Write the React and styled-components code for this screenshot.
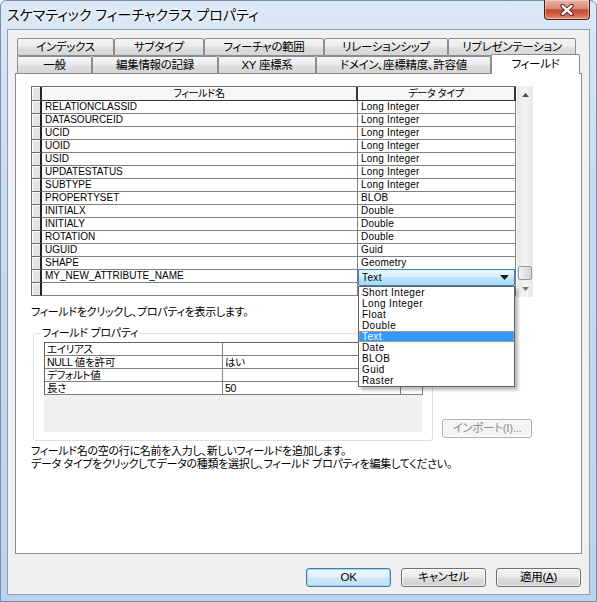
import React from 'react';
import styled, { createGlobalStyle, css } from 'styled-components';

const JP = `"Liberation Sans", "Noto Sans CJK JP", sans-serif`;
const GRID = `"Liberation Sans", Arial, sans-serif`;

// narrow Japanese UI text, close to the old bitmap UI font
const jpText = (size, line) => css`
  font: ${size}px/${line}px ${JP};
  font-feature-settings: "palt";
  letter-spacing: -0.3px;
  color: #000;
`;

const GlobalStyle = createGlobalStyle`
  html, body { margin: 0; padding: 0; overflow: hidden; background: #fff; }
  #root { width: 597px; height: 602px; }
  * { box-sizing: border-box; }
`;

const fields = [
  ['RELATIONCLASSID', 'Long Integer'],
  ['DATASOURCEID', 'Long Integer'],
  ['UCID', 'Long Integer'],
  ['UOID', 'Long Integer'],
  ['USID', 'Long Integer'],
  ['UPDATESTATUS', 'Long Integer'],
  ['SUBTYPE', 'Long Integer'],
  ['PROPERTYSET', 'BLOB'],
  ['INITIALX', 'Double'],
  ['INITIALY', 'Double'],
  ['ROTATION', 'Double'],
  ['UGUID', 'Guid'],
  ['SHAPE', 'Geometry'],
  ['MY_NEW_ATTRIBUTE_NAME', 'combo'],
  ['', ''],
];

const typeOptions = ['Short Integer', 'Long Integer', 'Float', 'Double', 'Text', 'Date', 'BLOB', 'Guid', 'Raster'];

const topTabs = [
  ['インデックス', 97],
  ['サブタイプ', 90],
  ['フィーチャの範囲', 120],
  ['リレーションシップ', 124],
  ['リプレゼンテーション', 128],
];

const bottomTabs = [
  ['一般', 75],
  ['編集情報の記録', 126],
  ['XY 座標系', 98],
  ['ドメイン、座標精度、許容値', 175],
];

const props = [
  ['エイリアス', ''],
  ['NULL 値を許可', 'はい'],
  ['デフォルト値', ''],
  ['長さ', '50'],
];

const Window = styled.div`
  width: 597px;
  height: 602px;
  display: flex;
  flex-direction: column;
  padding: 0 6px 6px;
  border: 1px solid #7890aa;
  border-radius: 6px 6px 0 0;
  background: linear-gradient(180deg, #dbe8f6 0%, #c8dcf1 30%, #bdd3ec 100%);
`;

const TitleBar = styled.div`
  height: 28px;
  display: flex;
  align-items: flex-start;
`;

const Title = styled.div`
  flex: 1;
  padding: 4px 0 0 0;
  font: 14px/20px ${JP};
  font-feature-settings: "palt";
  color: #000;
  text-shadow: 0 0 6px #fff, 0 0 3px #fff;
`;

const CloseButton = styled.div`
  width: 46px;
  height: 20px;
  margin-top: -1px;
  border: 1px solid #4d1e14;
  border-top: none;
  border-radius: 0 0 4px 4px;
  background: linear-gradient(180deg, #eab3a7 0%, #d98a76 45%, #c2482e 52%, #d0654b 80%, #e49a80 100%);
  box-shadow: inset 0 0 0 1px rgba(255, 255, 255, 0.35);
  display: flex;
  align-items: center;
  justify-content: center;
`;

const Client = styled.div`
  flex: 1;
  border: 1px solid #8aa0b8;
  background: #f0f0f0;
  display: flex;
  flex-direction: column;
  padding-top: 8px;
`;

const TabArea = styled.div`
  margin: 0 7px;
  display: flex;
  flex-direction: column;
`;

const TabRow = styled.div`
  display: flex;
  align-items: flex-start;
  height: 18px;
  padding-left: 2px;
  position: relative;
  z-index: ${p => p.$z};
  margin-bottom: ${p => (p.$last ? '-1px' : '0')};
`;

const Tab = styled.div`
  width: ${p => p.$w}px;
  height: ${p => (p.$active ? 20 : p.$short ? 17 : 18)}px;
  margin-top: ${p => (p.$active ? '-2px' : '0')};
  border: 1px solid #898c95;
  border-bottom: ${p => (p.$short || p.$active ? 'none' : '1px solid #898c95')};
  border-radius: 2px 2px 0 0;
  background: ${p =>
    p.$active ? '#fff' : 'linear-gradient(180deg, #f4f4f4 0%, #ececec 45%, #dedede 55%, #d6d6d6 100%)'};
  ${jpText(11.5, 16)}
  text-align: center;
  white-space: nowrap;
  padding-top: ${p => (p.$active ? '1px' : '0')};
`;

const Panel = styled.div`
  height: 481px;
  border: 1px solid #898c95;
  background: #fff;
  padding: 12px 0 0 15px;
  display: flex;
  flex-direction: column;
  position: relative;
  z-index: 1;
`;

const GridBlock = styled.div`
  display: flex;
  align-items: flex-start;
`;

const Table = styled.div`
  width: 485px;
  border-left: 1px solid #6e6e6e;
  border-top: 1px solid #6e6e6e;
  display: grid;
  grid-template-columns: 10px 316px 158px;
  grid-auto-rows: 13px;
  grid-template-rows: 14px;
`;

const Selector = styled.div`
  background: #e4e4e4;
  border-right: 2px solid #222;
  border-bottom: 1px solid #6a6a6a;
  box-shadow: inset 1px 1px 0 #fff;
`;

const HeadCell = styled.div`
  background: #f6f6f6;
  border-right: 2px solid #333;
  border-bottom: 1px solid #333;
  box-shadow: inset 1px 1px 0 #fff;
  ${jpText(10, 13)}
  text-align: center;
`;

const Cell = styled.div`
  position: relative;
  background: #fff;
  border-right: 1px solid #808080;
  border-bottom: 1px solid #808080;
  padding-left: 3px;
  font: 10px/12px ${GRID};
  letter-spacing: ${p => (p.$caps ? '0' : '0.2px')};
  color: #000;
  white-space: nowrap;
`;

const Combo = styled.div`
  position: absolute;
  top: -1px;
  left: 0;
  width: 157px;
  height: 17px;
  z-index: 3;
  border: 1px solid #3c7fb1;
  border-radius: 2px;
  background: linear-gradient(180deg, #eaf6fd 0%, #d9f0fc 45%, #bee6fd 50%, #a7d9f5 100%);
  display: flex;
  align-items: center;
  justify-content: space-between;
  padding: 0 5px 0 3px;
  font: 10px/14px ${GRID};
  letter-spacing: 0.4px;
`;

const DropList = styled.div`
  position: absolute;
  top: 16px;
  left: 0;
  width: 157px;
  z-index: 4;
  border: 1px solid #646464;
  background: #fff;
  box-shadow: 3px 3px 3px rgba(0, 0, 0, 0.28);
`;

const Option = styled.div`
  height: 11px;
  padding-left: 3px;
  font: 10px/11px ${GRID};
  letter-spacing: 0.4px;
  color: ${p => (p.$selected ? '#fff' : '#000')};
  background: ${p => (p.$selected ? '#3399ff' : 'transparent')};
  outline: ${p => (p.$selected ? '1px dotted #ff9a2e' : 'none')};
  outline-offset: -1px;
`;

const ScrollBar = styled.div`
  width: 16px;
  height: 211px;
  margin-left: 1px;
  background: linear-gradient(90deg, #e6e6e6, #f2f2f2 40%, #f2f2f2 60%, #e6e6e6);
  display: flex;
  flex-direction: column;
`;

const ScrollArrow = styled.div`
  height: 17px;
  display: flex;
  align-items: center;
  justify-content: center;
`;

const ScrollTrack = styled.div`
  flex: 1;
  display: flex;
  flex-direction: column;
  justify-content: flex-end;
`;

const Thumb = styled.div`
  height: 14px;
  margin: 0 1px;
  border: 1px solid #979797;
  border-radius: 2px;
  background: linear-gradient(90deg, #f3f3f3, #e2e2e2 50%, #d6d6d6);
`;

const Hint = styled.div`
  margin-top: 8px;
  ${jpText(11, 14)}
`;

const PropsRow = styled.div`
  display: flex;
  align-items: flex-end;
  margin-top: 7px;
`;

const GroupBox = styled.fieldset`
  width: 400px;
  margin: 0 0 0 2px;
  padding: 2px 10px 8px;
  border: 1px solid #d5dfe5;
  border-radius: 3px;
  min-width: 0;
`;

const GroupLabel = styled.legend`
  margin-left: -4px;
  padding: 0 2px;
  ${jpText(11, 14)}
`;

const PropsArea = styled.div`
  height: 90px;
  background: #f0f0f0;
`;

const PropsTable = styled.div`
  display: grid;
  grid-template-columns: 178px 178px 22px;
  grid-auto-rows: 13px;
  border-left: 1px solid #646464;
  border-top: 1px solid #646464;
`;

const PropCell = styled.div`
  background: #fff;
  border-right: 1px solid #808080;
  border-bottom: 1px solid #808080;
  padding-left: 2px;
  ${jpText(10.5, 12)}
  white-space: nowrap;
`;

const Button = styled.div`
  width: ${p => p.$w}px;
  height: ${p => p.$h}px;
  border: 1px solid ${p => (p.$disabled ? '#adb2b5' : p.$default ? '#3c7fb1' : '#707070')};
  border-radius: 3px;
  background: ${p =>
    p.$disabled
      ? '#f4f4f4'
      : p.$default
      ? 'linear-gradient(180deg, #eef6fb 0%, #e4f0f8 45%, #cfe6f4 55%, #c3dfef 100%)'
      : 'linear-gradient(180deg, #f2f2f2 0%, #ebebeb 45%, #dddddd 55%, #cfcfcf 100%)'};
  box-shadow: ${p => (p.$default ? 'inset 0 0 0 1px #9fd6f5' : 'inset 0 0 0 1px rgba(255,255,255,0.7)')};
  ${p => jpText(11.5, p.$h - 2)}
  color: ${p => (p.$disabled ? '#8d8d8d' : '#000')};
  text-align: center;
  white-space: nowrap;
`;

const ImportButton = styled(Button)`
  margin: 0 0 3px 9px;
`;

const HelpText = styled.div`
  margin-top: 4px;
  ${jpText(11, 13)}
`;

const ButtonRow = styled.div`
  display: flex;
  justify-content: flex-end;
  gap: 10px;
  margin-top: 14px;
  padding-right: 8px;
`;

const Triangle = ({ up, color = '#4d4d4d', w = 7, h = 4 }) => (
  <svg width={w} height={h} viewBox={`0 0 ${w} ${h}`}>
    <path d={up ? `M0 ${h} L${w / 2} 0 L${w} ${h}Z` : `M0 0 L${w} 0 L${w / 2} ${h}Z`} fill={color} />
  </svg>
);

const CloseGlyph = () => (
  <svg width="14" height="12" viewBox="0 0 14 12">
    <path d="M2.5 2 L11.5 10 M11.5 2 L2.5 10" stroke="#3a1510" strokeWidth="4.2" strokeLinecap="round" />
    <path d="M2.5 2 L11.5 10 M11.5 2 L2.5 10" stroke="#fff" strokeWidth="2.4" strokeLinecap="round" />
  </svg>
);

export default function App() {
  return (
    <>
      <GlobalStyle />
      <Window>
        <TitleBar>
          <Title>スケマティック フィーチャクラス プロパティ</Title>
          <CloseButton>
            <CloseGlyph />
          </CloseButton>
        </TitleBar>
        <Client>
          <TabArea>
            <TabRow $z={1}>
              {topTabs.map(([label, w]) => (
                <Tab key={label} $w={w}>{label}</Tab>
              ))}
            </TabRow>
            <TabRow $z={2} $last>
              {bottomTabs.map(([label, w]) => (
                <Tab key={label} $w={w} $short>{label}</Tab>
              ))}
              <Tab $w={89} $active>フィールド</Tab>
            </TabRow>
            <Panel>
              <GridBlock>
                <Table>
                  <Selector />
                  <HeadCell>フィールド名</HeadCell>
                  <HeadCell>データ タイプ</HeadCell>
                  {fields.map(([name, type], i) => (
                    <React.Fragment key={i}>
                      <Selector />
                      <Cell $caps>{name}</Cell>
                      <Cell>
                        {type === 'combo' ? (
                          <>
                            <Combo>
                              <span>Text</span>
                              <Triangle w={9} h={5} color="#1a1a1a" />
                            </Combo>
                            <DropList>
                              {typeOptions.map(opt => (
                                <Option key={opt} $selected={opt === 'Text'}>{opt}</Option>
                              ))}
                            </DropList>
                          </>
                        ) : (
                          type
                        )}
                      </Cell>
                    </React.Fragment>
                  ))}
                </Table>
                <ScrollBar>
                  <ScrollArrow>
                    <Triangle up />
                  </ScrollArrow>
                  <ScrollTrack>
                    <Thumb />
                  </ScrollTrack>
                  <ScrollArrow>
                    <Triangle color="#7a7a7a" />
                  </ScrollArrow>
                </ScrollBar>
              </GridBlock>
              <Hint>フィールドをクリックし、プロパティを表示します。</Hint>
              <PropsRow>
                <GroupBox>
                  <GroupLabel>フィールド プロパティ</GroupLabel>
                  <PropsArea>
                    <PropsTable>
                      {props.map(([k, v]) => (
                        <React.Fragment key={k}>
                          <PropCell>{k}</PropCell>
                          <PropCell>{v}</PropCell>
                          <PropCell />
                        </React.Fragment>
                      ))}
                    </PropsTable>
                  </PropsArea>
                </GroupBox>
                <ImportButton $w={90} $h={19} $disabled>インポート(I)...</ImportButton>
              </PropsRow>
              <HelpText>
                フィールド名の空の行に名前を入力し、新しいフィールドを追加します。
                <br />
                データ タイプをクリックしてデータの種類を選択し、フィールド プロパティを編集してください。
              </HelpText>
            </Panel>
          </TabArea>
          <ButtonRow>
            <Button $w={85} $h={19} $default>OK</Button>
            <Button $w={85} $h={19}>キャンセル</Button>
            <Button $w={85} $h={19}>適用(<u>A</u>)</Button>
          </ButtonRow>
        </Client>
      </Window>
    </>
  );
}
